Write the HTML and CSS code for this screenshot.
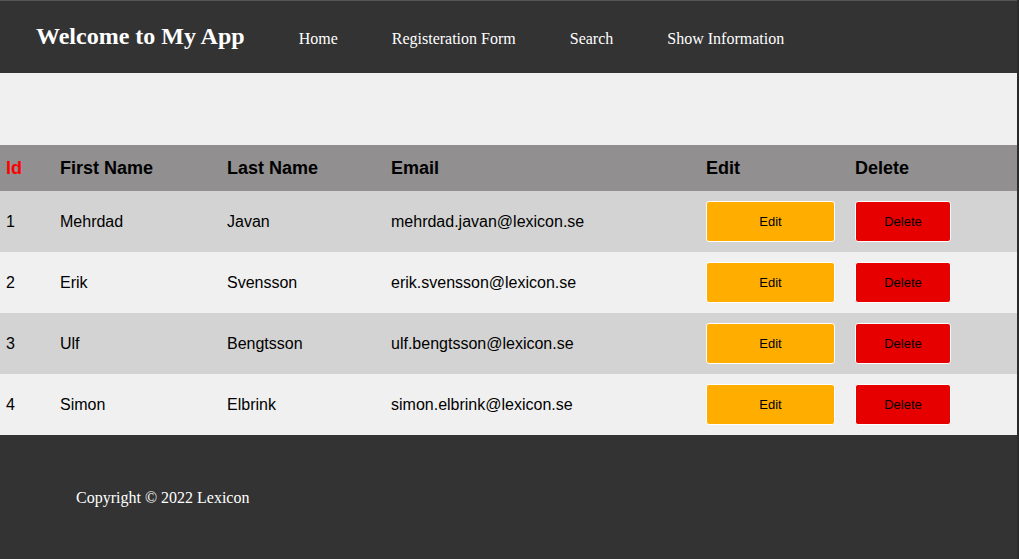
FILE: index.html
```html
<!DOCTYPE html>
<html lang="en">
<head>
<meta charset="utf-8">
<title>My App</title>
<link rel="stylesheet" href="styles.css">
</head>
<body>
<header class="topbar">
  <h1 class="brand">Welcome to My App</h1>
  <nav class="nav">
    <a href="#">Home</a>
    <a href="#">Registeration Form</a>
    <a href="#">Search</a>
    <a href="#">Show Information</a>
  </nav>
</header>
<main class="content">
  <table class="people">
    <colgroup>
      <col class="c-id"><col class="c-first"><col class="c-last"><col class="c-email"><col class="c-edit"><col class="c-del">
    </colgroup>
    <thead>
      <tr><th class="id-head">Id</th><th>First Name</th><th>Last Name</th><th>Email</th><th>Edit</th><th>Delete</th></tr>
    </thead>
    <tbody>
      <tr><td>1</td><td>Mehrdad</td><td>Javan</td><td>mehrdad.javan@lexicon.se</td><td><button class="btn btn-edit">Edit</button></td><td><button class="btn btn-delete">Delete</button></td></tr>
      <tr><td>2</td><td>Erik</td><td>Svensson</td><td>erik.svensson@lexicon.se</td><td><button class="btn btn-edit">Edit</button></td><td><button class="btn btn-delete">Delete</button></td></tr>
      <tr><td>3</td><td>Ulf</td><td>Bengtsson</td><td>ulf.bengtsson@lexicon.se</td><td><button class="btn btn-edit">Edit</button></td><td><button class="btn btn-delete">Delete</button></td></tr>
      <tr><td>4</td><td>Simon</td><td>Elbrink</td><td>simon.elbrink@lexicon.se</td><td><button class="btn btn-edit">Edit</button></td><td><button class="btn btn-delete">Delete</button></td></tr>
    </tbody>
  </table>
</main>
<footer class="footer">
  <p>Copyright © 2022 Lexicon</p>
</footer>
</body>
</html>
```

FILE: styles.css
```css
html {
  background: #2d2d2d;
}
body {
  margin: 0;
  border-right: 2px solid #2b2b2b;
  background: #f0f0f0;
  font-family: "Liberation Serif", "Times New Roman", serif;
  min-height: 559px;
  display: flex;
  flex-direction: column;
}
.topbar {
  background: #333333;
  border-top: 1px solid #555555;
  box-sizing: border-box;
  height: 73px;
  padding: 22px 0 0 36px;
  display: flex;
  align-items: baseline;
  gap: 54px;
  color: #ffffff;
}
.brand {
  margin: 0;
  font-size: 24px;
  font-weight: bold;
  line-height: 27px;
}
.nav {
  display: flex;
  gap: 54px;
}
.nav a {
  color: #ffffff;
  text-decoration: none;
  font-size: 16px;
}
.content {
  padding-top: 72px;
}
.people {
  width: 100%;
  border-collapse: collapse;
  table-layout: fixed;
  font-family: "Liberation Sans", Arial, sans-serif;
}
.c-id { width: 54px; }
.c-first { width: 167px; }
.c-last { width: 164px; }
.c-email { width: 315px; }
.c-edit { width: 149px; }
.people thead tr {
  background: #918f8f;
  height: 46px;
}
.people th {
  text-align: left;
  font-size: 18px;
  font-weight: bold;
  color: #000000;
  padding: 0 6px;
  vertical-align: middle;
}
.people th.id-head {
  color: #ff0000;
}
.people tbody tr {
  height: 61px;
}
.people tbody tr:nth-child(odd) {
  background: #d3d3d3;
}
.people tbody tr:nth-child(even) {
  background: #f0f0f0;
}
.people td {
  padding: 0 6px;
  font-size: 16px;
  color: #000000;
  vertical-align: middle;
}
.btn {
  display: block;
  height: 41px;
  border: 1px solid #ffffff;
  border-radius: 3px;
  font-family: "Liberation Sans", Arial, sans-serif;
  font-size: 13px;
  color: #000000;
  padding: 0;
}
.btn-edit {
  width: 129px;
  background: #ffae00;
}
.btn-delete {
  width: 96px;
  background: #e60000;
}
.footer {
  flex: 1;
  background: #333333;
  color: #ffffff;
  padding: 54px 76px 0;
}
.footer p {
  margin: 0;
  font-size: 16px;
}
```
